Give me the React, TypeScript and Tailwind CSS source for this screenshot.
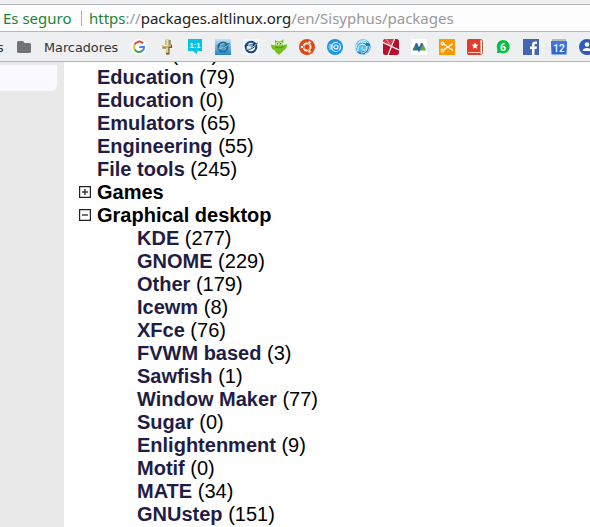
import React from "react";

type Item = { name: string; count: number };

const topItems: Item[] = [
  { name: "Editors", count: 177 },
  { name: "Education", count: 79 },
  { name: "Education", count: 0 },
  { name: "Emulators", count: 65 },
  { name: "Engineering", count: 55 },
  { name: "File tools", count: 245 },
];

const desktopItems: Item[] = [
  { name: "KDE", count: 277 },
  { name: "GNOME", count: 229 },
  { name: "Other", count: 179 },
  { name: "Icewm", count: 8 },
  { name: "XFce", count: 76 },
  { name: "FVWM based", count: 3 },
  { name: "Sawfish", count: 1 },
  { name: "Window Maker", count: 77 },
  { name: "Sugar", count: 0 },
  { name: "Enlightenment", count: 9 },
  { name: "Motif", count: 0 },
  { name: "MATE", count: 34 },
  { name: "GNUstep", count: 151 },
];

function Row({ name, count }: Item) {
  return (
    <li className="h-[23px] whitespace-nowrap">
      <a className="font-bold text-[#1f1d45]">{name}</a> ({count})
    </li>
  );
}

function Group({ name, open }: { name: string; open: boolean }) {
  return (
    <div className="flex h-[23px] items-center">
      <svg className="mr-1.5 mb-0.5 size-3 shrink-0" viewBox="0 0 12 12" fill="none">
        <path d="M.6.6h10.800v10.800H.6z" stroke="#222" strokeWidth="1.200" />
        <path d="M3 6h6" stroke="#222" strokeWidth="1.300" />
        {!open && <path d="M6 3v6" stroke="#222" strokeWidth="1.300" />}
      </svg>
      <span className="font-bold leading-[23px]">{name}</span>
    </div>
  );
}

function Icon({ children }: { children: React.ReactNode }) {
  return (
    <svg className="size-4 shrink-0" viewBox="0 0 16 16" fill="none">
      {children}
    </svg>
  );
}

function Bookmarks() {
  return (
    <div className="flex gap-3">
      <Icon>
        <circle cx="8" cy="8" r="8" fill="#fff" />
        <path d="M12 4.300A5 5 0 0 0 3.600 5.700" stroke="#ea4335" strokeWidth="2" />
        <path d="M3.600 5.700a5 5 0 0 0 0 4.700" stroke="#fbbc05" strokeWidth="2" />
        <path d="M3.600 10.400a5 5 0 0 0 7.700 1.400" stroke="#34a853" strokeWidth="2" />
        <path d="M11.300 11.800A5 5 0 0 0 13 8H8.200" stroke="#4285f4" strokeWidth="2" />
      </Icon>
      <Icon>
        <path d="M6.500 1h5v4.500H13v3.400h-2.500V15.500H7V9.500H3.500V6h3z" fill="#65582b" />
        <path d="M6 .5h4.500v5H12v2.300H9.500V14H6.800V8.500H3V6h3z" fill="#c9b676" />
        <path d="M7.300 1.500h1v5H4.500M8 9v4" stroke="#fff3b8" />
      </Icon>
      <Icon>
        <path d="M1 0h14v12H10v3.500L6 12H1z" fill="#06c2e4" />
        <text x="8" y="9" textAnchor="middle" fontSize="7.500" fontWeight="700" fill="#fff" fontFamily="Liberation Sans, sans-serif">1:1</text>
      </Icon>
      <Icon>
        <defs>
          <linearGradient id="sky" x1="0" y1="0" x2="0" y2="1">
            <stop stopColor="#c3e1f1" />
            <stop offset="1" stopColor="#2684bd" />
          </linearGradient>
        </defs>
        <path d="M0 0h16v16H0z" fill="url(#sky)" />
        <circle cx="8" cy="8" r="4.700" stroke="#1d6c9f" strokeWidth="1.800" />
        <path d="M1 6.500c4-1 8-1 14-2.500-2 4.500-7 7-13 7 3-1 6-2 7-3.500z" fill="#1b6799" />
        <path d="M3.500 10c4-.2 7-2 10-4.500M5 6h5" stroke="#a5d4ea" strokeWidth=".9" />
      </Icon>
      <Icon>
        <path d="M0 0h16v16H0z" fill="#f3f6fa" />
        <circle cx="8" cy="8" r="5.300" stroke="#16477b" strokeWidth="2" />
        <path d="M1 6.500c4-1 8-1 14-3-2 5-7 8-13 8 3-1 6-2 7-4z" fill="#153a68" />
        <path d="M3.500 10c4-.2 7-2 10-5M5 6.200h5" stroke="#cee5f5" />
      </Icon>
      <Icon>
        <path d="M0 5.500l4 1V1l2.500 1.200h3L12.500.3 12 6.500l4-1.500c0 4-1.500 6-4 6.500-.4 1.500-1.300 2.300-2.300 2.800L8 16l-2-1.700c-1-.5-1.700-1.500-2-2.800C1.500 11 0 9 0 5.500z" fill="#72bf20" />
        <path d="M4 7c2 1.500 6 1.500 8 0l-.5 2h-7z" fill="#529915" />
        <circle cx="6.200" cy="4.700" r="1.800" fill="#e7f8bd" />
        <circle cx="10" cy="4.700" r="1.800" fill="#e7f8bd" />
        <circle cx="6.500" cy="4.700" r=".8" fill="#315814" />
        <circle cx="9.700" cy="4.700" r=".8" fill="#315814" />
        <path d="M7 6h2.200L8.100 8z" fill="#f09a25" />
      </Icon>
      <Icon>
        <circle cx="8" cy="8" r="8" fill="#dd4814" />
        <circle cx="8" cy="8" r="3.600" stroke="#fff" strokeWidth="1.800" />
        <g fill="#fff" stroke="#dd4814" strokeWidth=".8">
          <circle cx="3" cy="8" r="1.700" />
          <circle cx="10.500" cy="3.500" r="1.700" />
          <circle cx="10.500" cy="12.500" r="1.700" />
        </g>
      </Icon>
      <Icon>
        <circle cx="8" cy="8" r="8" fill="#1794ee" />
        <circle cx="9" cy="8" r="4.500" stroke="#fff" strokeWidth="1.200" />
        <circle cx="9" cy="8" r="2" stroke="#fff" strokeWidth="1.200" />
        <path d="M2 6h4M1.500 8h5M2 10h4" stroke="#e3f5ff" strokeWidth=".9" />
        <path d="M12 2.500l-1 2M12 13.500l-1-2" stroke="#1794ee" strokeWidth="1.500" />
      </Icon>
      <Icon>
        <circle cx="8" cy="8" r="7.800" fill="#55bce7" />
        <path d="M15 6c1 6-4 10-9 9-2-.4-3-1-4-2 5 1 9-1 9-5 0-2-1-3-3-3 4-2 7-1 7 1z" fill="#1977c0" />
        <path d="M1 9c0-5 5-8 10-5M3 12c-1-5 3-8 7-6 3 2 1 6-2 5-2-1-1-3 0-3M6 14c4 0 7-3 6-7M10 15c3-2 5-4 4-8M4 3c3-2 7-2 9 1" stroke="#effbff" strokeWidth="1" />
      </Icon>
      <Icon>
        <rect width="16" height="16" rx="2.500" fill="#b40f2c" />
        <path d="M2 0h9L8 7 0 3V2z" fill="#d43949" />
        <path d="M0 3.500l16 7.500M11.500 0L5 16" stroke="#fff" strokeWidth="1.200" />
        <path d="M3 0l5 7" stroke="#f2bfc4" strokeWidth=".7" />
      </Icon>
      <Icon>
        <path d="M0 0h16v16H0z" fill="#fff" />
        <path d="M2 11L5.500 4 8 11z" fill="#347963" stroke="#347963" />
        <path d="M9 11l2-7 3.500 7z" fill="#69a343" stroke="#69a343" />
        <path d="M5 4.500L8 11l3-6.500" stroke="#296b9f" strokeWidth="2.200" />
      </Icon>
      <Icon>
        <path d="M0 0h16v16H0z" fill="#ff9800" />
        <path d="M4.500 5l9.500 6.500M4.500 11L14 4.500" stroke="#fff" strokeWidth="1.400" />
        <circle cx="3.500" cy="4.500" r="1.300" stroke="#fff" strokeWidth="1.200" />
        <circle cx="3.500" cy="11.500" r="1.300" stroke="#fff" strokeWidth="1.200" />
      </Icon>
      <Icon>
        <rect x=".5" y=".5" width="15" height="15" rx="2" fill="#fff" stroke="#b8592e" />
        <path d="M2 0h11.500v16H2a2 2 0 0 1-2-2V2a2 2 0 0 1 2-2z" fill="#df3c2d" />
        <path d="M1 13.500h12" stroke="#f3c5bd" />
        <path d="M8 3.300l1 2.300 2.500.2-2 1.600.7 2.400L8 8.500 5.800 9.800l.7-2.400-2-1.600 2.500-.2z" fill="#fff" />
      </Icon>
      <Icon>
        <path d="M8 .5a7.200 7.200 0 1 1-3 13.700L1 15l1-4A7.200 7.200 0 0 1 8 .5z" fill="#08bd43" stroke="#fff" />
        <text x="8" y="11.700" textAnchor="middle" fontSize="10.500" fontWeight="700" fill="#fff" fontFamily="Roboto, sans-serif">6</text>
      </Icon>
      <Icon>
        <path d="M0 0h16v16H0z" fill="#4267b2" />
        <path d="M9 16v-6H7V7.500h2V5.700C9 3.500 10.300 2.500 12.300 2.500H14V5h-1.200c-1 0-1.300.4-1.300 1.200v1.300H14L13.600 10h-2.100v6z" fill="#fff" />
      </Icon>
      <Icon>
        <path d="M1 0h14v3H1z" fill="#b9b9b9" />
        <path d="M0 2h16l-.5 13.500H.5z" fill="#3367d6" />
        <path d="M0 2h16v6H0z" fill="#3f76e6" />
        <text x="8" y="13" textAnchor="middle" fontSize="10" fontWeight="500" fill="#fff" fontFamily="Roboto, sans-serif">12</text>
      </Icon>
      <Icon>
        <circle cx="8" cy="8" r="8" fill="#3159bd" />
        <circle cx="8" cy="5.500" r="2.300" fill="#fff" />
        <path d="M3.500 12c0-4 9-4 9 0z" fill="#fff" />
      </Icon>
    </div>
  );
}

export default function App() {
  return (
    <div className="flex h-[527px] w-[590px] flex-col overflow-hidden bg-white">
      <header className="shrink-0 bg-[#eeeff1] pt-1 font-['DejaVu_Sans',sans-serif]">
        <div className="flex h-7 items-center overflow-hidden border-y border-[#b5b6b8] bg-[#fdfdfd] pl-[3px] text-[15px] whitespace-nowrap">
          <span className="w-[78px] shrink-0 font-['Noto_Sans',sans-serif] text-[#1b843b]">Es seguro</span>
          <span className="mr-[7px] h-4 w-px shrink-0 bg-[#b0b0b0]" />
          <span className="font-['Noto_Sans',sans-serif] text-[#999]">
            <span className="text-[#1b843b]">https</span>://<span className="text-[#222]">packages.altlinux.org</span>/en/Sisyphus/packages
          </span>
        </div>
        <nav className="flex h-[30px] items-center overflow-hidden border-b border-[#b5b7b9] text-[12.800px] text-[#333]">
          <span className="flex w-[17px] shrink-0 justify-start pt-0.5"><span className="-ml-[3px]">s</span></span>
          <svg className="mr-[13px] h-3 w-3.5 shrink-0" viewBox="0 0 14 12" fill="#707372">
            <path d="M1 0h5l1.500 2H13l1 1v8l-1 1H1l-1-1V1z" />
          </svg>
          <span className="w-[87px] shrink-0 pt-0.5">Marcadores</span>
          <Bookmarks />
        </nav>
      </header>
      <div className="flex min-h-0 flex-1">
        <aside className="w-16 shrink-0 bg-[#e9e9e9] pt-[3px]">
          <div className="h-[26px] w-[57px] rounded-br-md bg-[#f9f9ff]" />
        </aside>
        <main className="flex-1 overflow-hidden pl-[15px] font-['Liberation_Sans',Arial,sans-serif] text-[20px] leading-[23px] text-black">
          <div className="-mt-[19px]">
            <ul className="pl-[18px]">
              {topItems.map((item, i) => <Row key={i} {...item} />)}
            </ul>
            <Group name="Games" open={false} />
            <Group name="Graphical desktop" open />
            <ul className="pl-[58px]">
              {desktopItems.map((item) => <Row key={item.name} {...item} />)}
            </ul>
          </div>
        </main>
      </div>
    </div>
  );
}
